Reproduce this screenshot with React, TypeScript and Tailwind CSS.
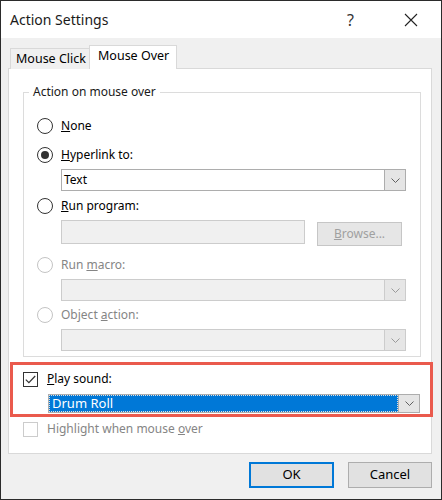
import React from "react";

const font = { fontFamily: '"Noto Sans", "Open Sans", Arial, sans-serif' };

function Chevron({ color = "#606060" }: { color?: string }) {
  return (
    <svg width="9" height="5" viewBox="0 0 9 5" fill="none">
      <path d="M0.5 0.5 L4.5 4.5 L8.5 0.5" stroke={color} strokeWidth="1" />
    </svg>
  );
}

function Radio({ checked, disabled }: { checked?: boolean; disabled?: boolean }) {
  return (
    <span
      className={`w-4 h-4 rounded-full border flex items-center justify-center bg-white shrink-0 ${
        disabled ? "border-[#c4c4c4]" : "border-[#333333]"
      }`}
    >
      {checked && <span className="w-2 h-2 rounded-full bg-[#333333]" />}
    </span>
  );
}

function Select({
  value,
  disabled,
  selected,
  className = "",
}: {
  value?: string;
  disabled?: boolean;
  selected?: boolean;
  className?: string;
}) {
  return (
    <div
      className={`flex border ${
        disabled ? "bg-[#f0f0f0] border-[#cccccc]" : "bg-white border-[#adadad]"
      } ${className}`}
    >
      <div
        className={`flex-1 flex items-center pl-[2px] ${
          selected ? "bg-[#0078d7] text-white border border-dotted border-[#e0e0e0]" : ""
        }`}
      >
        {value}
      </div>
      <div
        className={`w-[21px] flex items-center justify-center border-l ${
          disabled ? "bg-[#e6e6e6] border-[#cccccc]" : "bg-[#e5e5e5] border-[#adadad]"
        }`}
      >
        <Chevron color={disabled ? "#9a9a9a" : "#606060"} />
      </div>
    </div>
  );
}

export default function App() {
  return (
    <div
      className="w-[442px] h-[500px] border border-[#2b2b2b] bg-[#f0f0f0] flex flex-col text-[12px] text-[#000000]"
      style={font}
    >
      {/* Title bar */}
      <div className="h-[37px] bg-white flex items-center pl-[9px] shrink-0">
        <span className="text-[14px] text-[#1a1a1a] flex-1">Action Settings</span>
        <span className="text-[16px] text-[#333333] mr-[50px]">?</span>
        <svg width="14" height="14" viewBox="0 0 14 14" className="mr-[23px]">
          <path d="M1 1 L13 13 M13 1 L1 13" stroke="#222222" strokeWidth="1.1" />
        </svg>
      </div>

      <div className="flex-1 flex flex-col pl-[7px] pr-[9px] pt-[7px]">
        {/* Tabs */}
        <div className="flex items-end pl-[2px] h-[24px] relative z-10 -mb-px">
          <div className="w-[80px] h-[21px] border border-b-0 border-[#d9d9d9] bg-[#f0f0f0] flex items-center pl-[5px] text-[12.5px]">
            Mouse Click
          </div>
          <div className="w-[88px] h-[24px] border border-b-0 border-[#d9d9d9] bg-white flex items-center pl-[8px] pb-[3px] text-[12.5px] -ml-px">
            Mouse Over
          </div>
        </div>

        {/* Panel */}
        <div className="h-[386px] bg-white border border-[#d9d9d9] flex flex-col">
          <fieldset className="border border-[#dcdcdc] ml-[14px] mr-[10px] mt-[15px] pb-[5px] pl-[13px] pr-[14px]">
            <legend className="-ml-[8px] px-[4px] h-[16px] leading-[16px] text-[#1a1a1a]">Action on mouse over</legend>
            <div className="flex flex-col">
              <div className="h-5 flex items-center gap-[8px] mt-[16px]">
                <Radio />
                <span>
                  <u>N</u>one
                </span>
              </div>
              <div className="h-5 flex items-center gap-[8px] mt-[9px]">
                <Radio checked />
                <span>
                  <u>H</u>yperlink to:
                </span>
              </div>
              <Select value="Text" className="h-[22px] ml-[24px] mt-[4px]" />
              <div className="h-5 flex items-center gap-[8px] mt-[5px]">
                <Radio />
                <span>
                  <u>R</u>un program:
                </span>
              </div>
              <div className="flex items-start ml-[24px] mt-[4px] h-[26px]">
                <div className="w-[244px] h-[24px] bg-[#f0f0f0] border border-[#cccccc]" />
                <div className="ml-[12px] mt-[2px] w-[85px] h-[24px] bg-[#e6e6e6] border border-[#c6c6c6] flex items-center justify-center text-[#a0a0a0]">
                  <span>
                    <u>B</u>rowse...
                  </span>
                </div>
              </div>
              <div className="h-5 flex items-center gap-[8px] mt-[9px] text-[#858585]">
                <Radio disabled />
                <span>
                  Run <u>m</u>acro:
                </span>
              </div>
              <Select disabled className="h-[22px] ml-[24px] mt-[4px]" />
              <div className="h-5 flex items-center gap-[8px] mt-[4px] text-[#858585]">
                <Radio disabled />
                <span>
                  Object <u>a</u>ction:
                </span>
              </div>
              <Select disabled className="h-[22px] ml-[24px] mt-[4px]" />
            </div>
          </fieldset>

          {/* Highlighted box */}
          <div className="ml-[1px] -mr-[2px] mt-[5px] h-[55px] border-[3px] border-[#ea5a4d] flex flex-col pl-[10px] pr-[10px] pt-[4px]">
            <div className="h-5 flex items-center gap-[9px]">
              <span className="w-[15px] h-[15px] border border-[#333333] bg-white flex items-center justify-center">
                <svg width="11" height="9" viewBox="0 0 11 9" fill="none">
                  <path d="M0.8 4.6 L3.9 7.7 L10.2 1" stroke="#333333" strokeWidth="1.2" />
                </svg>
              </span>
              <span>
                <u>P</u>lay sound:
              </span>
            </div>
            <Select value="Drum Roll" selected className="h-[19px] ml-[25px] mt-[5px] text-[13px]" />
          </div>

          <div className="h-5 flex items-center gap-[9px] ml-[14px] mt-[2px] text-[#858585]">
            <span className="w-[15px] h-[15px] border border-[#cccccc] bg-white" />
            <span>
              Highlight when mouse <u>o</u>ver
            </span>
          </div>
        </div>

        {/* Footer buttons */}
        <div className="flex justify-end gap-[14px] mt-[8px]">
          <div className="w-[85px] h-[26px] bg-[#e1e1e1] border-2 border-[#0078d7] flex items-center justify-center text-[13px]">
            OK
          </div>
          <div className="w-[84px] h-[26px] bg-[#e1e1e1] border border-[#adadad] flex items-center justify-center text-[13px]">
            Cancel
          </div>
        </div>
      </div>
    </div>
  );
}
